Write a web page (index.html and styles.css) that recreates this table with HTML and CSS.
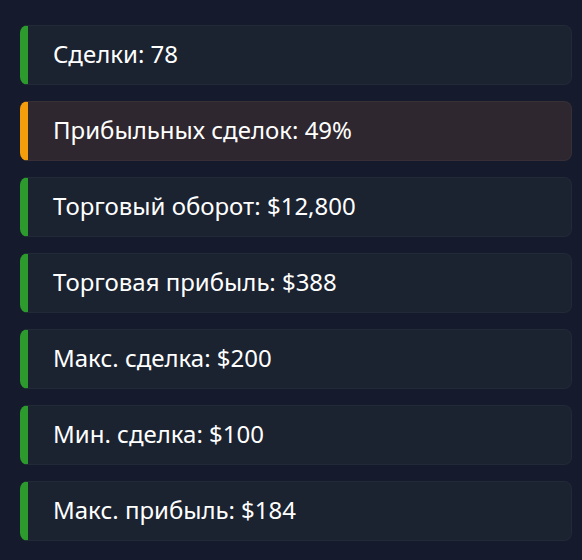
FILE: index.html
```html
<!DOCTYPE html>
<html lang="ru">
<head>
<meta charset="utf-8">
<link rel="stylesheet" href="styles.css">
</head>
<body>
<div class="list">
  <div class="stat">Сделки: 78</div>
  <div class="stat warn">Прибыльных сделок: 49%</div>
  <div class="stat">Торговый оборот: $12,800</div>
  <div class="stat">Торговая прибыль: $388</div>
  <div class="stat">Макс. сделка: $200</div>
  <div class="stat">Мин. сделка: $100</div>
  <div class="stat">Макс. прибыль: $184</div>
</div>
</body>
</html>
```
FILE: styles.css
```css
html, body {
  margin: 0;
  padding: 0;
  background: #161a2d;
}
body {
  font-family: "Noto Sans", "Open Sans", sans-serif;
  color: #ffffff;
}
.list {
  display: flex;
  flex-direction: column;
  gap: 16px;
  padding: 25px 10px 0 20px;
}
.stat {
  height: 60px;
  box-sizing: border-box;
  display: flex;
  align-items: center;
  padding: 0 0 2px 25px;
  font-size: 24px;
  line-height: 32px;
  background: #1b2230;
  border: 1px solid #222a37;
  border-left: 8px solid #2c9a2c;
  border-radius: 8px;
}
.stat.warn {
  background: #2f272f;
  border-color: #372f36;
  border-left-color: #f59e0b;
}
```
